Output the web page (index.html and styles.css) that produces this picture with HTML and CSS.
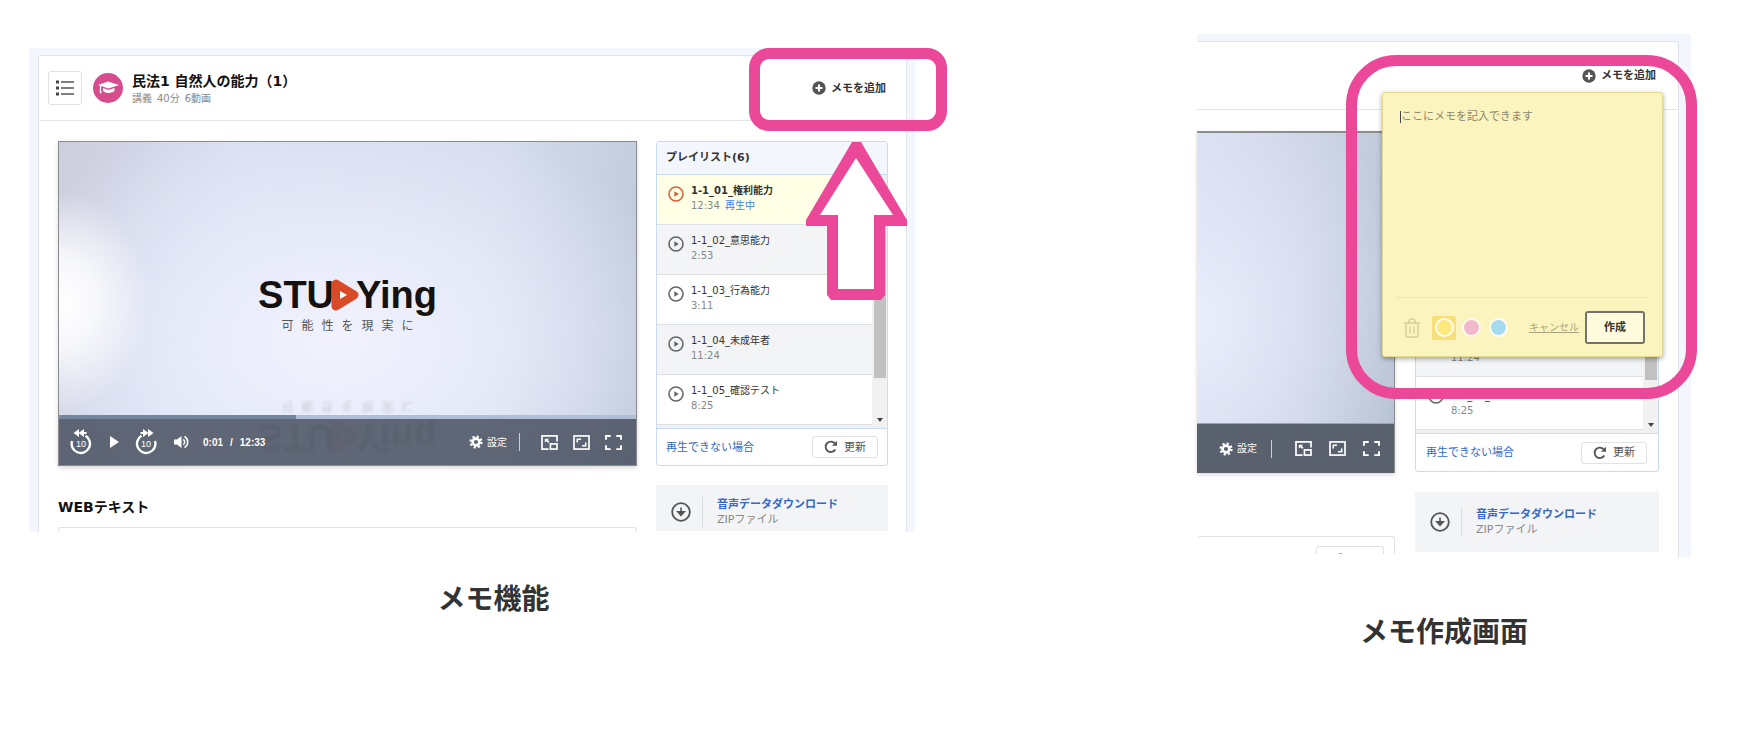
FILE: index.html
```html
<!DOCTYPE html>
<html lang="ja">
<head>
    <meta charset="UTF-8">
    <meta name="viewport" content="width=device-width, initial-scale=1.0">
    <title>メモ機能</title>
    <link rel="stylesheet" href="styles.css">
</head>
<body>
    <!-- shared icons -->
    <svg class="icon-defs" aria-hidden="true">
        <symbol id="i-plus" viewBox="0 0 14 14">
            <circle cx="7" cy="7" r="6.7" fill="#555"/>
            <path d="M7 3.5v7M3.5 7h7" stroke="#fff" stroke-width="2"/>
        </symbol>
        <symbol id="i-play" viewBox="0 0 16 16">
            <circle cx="8" cy="8" r="7" fill="none" stroke="currentColor" stroke-width="1.6"/>
            <path d="M6.3 5.2l4.6 2.8-4.6 2.8z" fill="currentColor"/>
        </symbol>
        <symbol id="i-down" viewBox="0 0 20 20">
            <circle cx="10" cy="10" r="8.8" fill="none" stroke="#555" stroke-width="1.8"/>
            <path d="M10 5.5v6M6.8 9.8l3.2 3.6 3.2-3.6z" stroke="#555" stroke-width="1.6" fill="#555"/>
        </symbol>
        <symbol id="i-reload" viewBox="0 0 14 14">
            <path d="M11.3 9.5A5.2 5.2 0 1 1 10.8 3.4" fill="none" stroke="#555" stroke-width="1.9"/>
            <path d="M13 .8v5H8z" fill="#555"/>
        </symbol>
        <symbol id="i-gear" viewBox="0 0 14 14">
            <circle cx="7" cy="7" r="3.4" fill="none" stroke="#fff" stroke-width="2.6"/>
            <circle cx="7" cy="7" r="5.4" fill="none" stroke="#fff" stroke-width="2.4" stroke-dasharray="2.12 2.12"/>
        </symbol>
        <symbol id="i-pip" viewBox="0 0 18 16">
            <path d="M8 15H1V1h16v6" fill="none" stroke="#fff" stroke-width="1.8"/>
            <rect x="10" y="9.5" width="7" height="5.5" fill="none" stroke="#fff" stroke-width="1.8"/>
            <path d="M4 4h4.500L7.200 5.400 9 7.200 7.600 8.500 5.700 6.700 4 8z" fill="#fff"/>
        </symbol>
        <symbol id="i-wide" viewBox="0 0 18 16">
            <rect x="1" y="1" width="16" height="14" fill="none" stroke="#fff" stroke-width="1.8"/>
            <path d="M4.500 8V4.500H8.500M13.500 8v3.500H9.500" fill="none" stroke="#fff" stroke-width="1.7"/>
        </symbol>
        <symbol id="i-full" viewBox="0 0 18 16">
            <path d="M1 5V1h5M12 1h5v4M17 11v4h-5M6 15H1v-4" fill="none" stroke="#fff" stroke-width="2"/>
        </symbol>
        <symbol id="i-back" viewBox="0 0 22 26">
            <path d="M2 12a9.200 9.200 0 1 0 13.500-5.200" fill="none" stroke="#fff" stroke-width="2.400"/>
            <path d="M9 0v8L3.500 4zM14 0v8L8.500 4zM13 3h3.500v2H13z" fill="#fff"/>
        </symbol>
        <symbol id="i-volume" viewBox="0 0 16 14">
            <path d="M1 4.500h3L8.500 1v12L4 9.500H1z" fill="#fff"/>
            <path d="M10.300 4.300a3.400 3.400 0 0 1 0 5.400M11.500 1.500a6.300 6.300 0 0 1 0 11" fill="none" stroke="#fff" stroke-width="1.500"/>
        </symbol>
        <symbol id="i-logo" viewBox="0 0 28 32">
            <path d="M5 5v22l18-11z" fill="#d94a26" stroke="#d94a26" stroke-width="9" stroke-linejoin="round"/>
            <path d="M9 12v8l7-4z" fill="#fff"/>
        </symbol>
    </svg>

    <main class="features">
        <figure class="feature feature-add">
            <div class="shot">
                <div class="screen">
                    <section class="card">
                        <header class="card-head">
                            <button class="menu-btn" type="button" aria-label="目次">
                                <svg width="20" height="18" viewBox="0 0 20 18">
                                    <path d="M1 3h3M1 9h3M1 15h3" stroke="#444" stroke-width="3"/>
                                    <path d="M6 3h13M6 9h13M6 15h13" stroke="#555" stroke-width="1.400"/>
                                </svg>
                            </button>
                            <svg class="badge" width="30" height="30" viewBox="0 0 30 30" aria-hidden="true">
                                <circle cx="15" cy="15" r="15" fill="#d64c8d"/>
                                <path d="M5 12l10-3.500L26 12l-10.500 3.500zM10 15l5.500 2 6-2v3c-3 2.500-9 2.500-11.500 0z" fill="#fff"/>
                                <path d="M7.500 12.500v8M6.800 19h1.700" stroke="#fff" stroke-width="1.300"/>
                            </svg>
                            <div class="lesson">
                                <h1>民法1 自然人の能力（1）</h1>
                                <p>講義&ensp;40分&ensp;6動画</p>
                            </div>
                            <button class="add-memo" type="button"><svg><use href="#i-plus"/></svg>メモを追加</button>
                        </header>
                        <div class="card-body">
                            <div class="col-main">
                                <div class="video">
                                    <div class="brand">
                                        <div class="brand-name">STU<svg><use href="#i-logo"/></svg>Ying</div>
                                        <div class="tagline"><span>可</span><span>能</span><span>性</span><span>を</span><span>現</span><span>実</span><span>に</span></div>
                                    </div>
                                    <div class="brand reflection" aria-hidden="true">
                                        <div class="brand-name">STU<svg><use href="#i-logo"/></svg>Ying</div>
                                        <div class="tagline"><span>可</span><span>能</span><span>性</span><span>を</span><span>現</span><span>実</span><span>に</span></div>
                                    </div>
                                    <div class="player">
                                        <div class="progress"><div class="buffered"></div></div>
                                        <div class="controls">
                                            <button type="button" class="skip" aria-label="10秒戻る"><svg><use href="#i-back"/></svg><span>10</span></button>
                                            <button type="button" class="play" aria-label="再生"><svg width="9" height="12" viewBox="0 0 9 12"><path d="M0 0l9 6-9 6z" fill="#fff"/></svg></button>
                                            <button type="button" class="skip forward" aria-label="10秒進む"><svg><use href="#i-back"/></svg><span>10</span></button>
                                            <button type="button" class="volume" aria-label="音量"><svg><use href="#i-volume"/></svg></button>
                                            <span class="time"><span>0:01</span><span>/</span><span>12:33</span></span>
                                            <button type="button" class="settings"><svg><use href="#i-gear"/></svg>設定</button>
                                            <span class="divider"></span>
                                            <button type="button" class="mode" aria-label="小窓"><svg><use href="#i-pip"/></svg></button>
                                            <button type="button" class="mode" aria-label="ワイド"><svg><use href="#i-wide"/></svg></button>
                                            <button type="button" class="mode" aria-label="全画面"><svg><use href="#i-full"/></svg></button>
                                        </div>
                                    </div>
                                </div>
                                <h2>WEBテキスト</h2>
                                <div class="text-box"></div>
                            </div>
                            <aside class="col-side">
                                <div class="playlist">
                                    <h3>プレイリスト(6)</h3>
                                    <div class="list-area">
                                        <ul>
                                            <li class="playing"><svg><use href="#i-play"/></svg><div><b>1-1_01_権利能力</b><small>12:34 <em>再生中</em></small></div></li>
                                            <li><svg><use href="#i-play"/></svg><div>1-1_02_意思能力<small>2:53</small></div></li>
                                            <li><svg><use href="#i-play"/></svg><div>1-1_03_行為能力<small>3:11</small></div></li>
                                            <li><svg><use href="#i-play"/></svg><div>1-1_04_未成年者<small>11:24</small></div></li>
                                            <li><svg><use href="#i-play"/></svg><div>1-1_05_確認テスト<small>8:25</small></div></li>
                                        </ul>
                                        <div class="scrollbar"><div class="thumb"></div><i></i></div>
                                    </div>
                                    <div class="list-foot">
                                        <a href="#">再生できない場合</a>
                                        <button type="button"><svg><use href="#i-reload"/></svg>更新</button>
                                    </div>
                                </div>
                                <div class="download">
                                    <svg><use href="#i-down"/></svg>
                                    <div><a href="#">音声データダウンロード</a><p>ZIPファイル</p></div>
                                </div>
                            </aside>
                        </div>
                    </section>
                </div>
                <div class="ring"></div>
                <svg class="arrow" viewBox="0 0 101 158" aria-hidden="true">
                    <path d="M46 0h9L101 78v6H79v69l-4 5H25l-4-5V84H0v-6z" fill="#ec4899"/>
                    <path d="M50 16L14 73h18v74h36V73h19z" fill="#fff"/>
                </svg>
            </div>
            <figcaption>メモ機能</figcaption>
        </figure>

        <figure class="feature feature-create">
            <div class="shot">
                <div class="screen">
                    <section class="card">
                        <header class="card-head">
                            <button class="add-memo" type="button"><svg><use href="#i-plus"/></svg>メモを追加</button>
                        </header>
                        <div class="card-body">
                            <div class="col-main">
                                <div class="video">
                                    <div class="player">
                                        <div class="controls">
                                            <button type="button" class="settings"><svg><use href="#i-gear"/></svg>設定</button>
                                            <span class="divider"></span>
                                            <button type="button" class="mode" aria-label="小窓"><svg><use href="#i-pip"/></svg></button>
                                            <button type="button" class="mode" aria-label="ワイド"><svg><use href="#i-wide"/></svg></button>
                                            <button type="button" class="mode" aria-label="全画面"><svg><use href="#i-full"/></svg></button>
                                        </div>
                                    </div>
                                </div>
                                <div class="text-box"><div class="text-tool"><span></span></div></div>
                            </div>
                            <aside class="col-side">
                                <div class="playlist">
                                    <h3></h3>
                                    <div class="list-area">
                                        <ul>
                                            <li></li>
                                            <li></li>
                                            <li></li>
                                            <li><div>&nbsp;<small>11:24</small></div></li>
                                            <li><svg><use href="#i-play"/></svg><div>1-1_05_<small>8:25</small></div></li>
                                        </ul>
                                        <div class="scrollbar"><div class="thumb"></div><i></i></div>
                                    </div>
                                    <div class="list-foot">
                                        <a href="#">再生できない場合</a>
                                        <button type="button"><svg><use href="#i-reload"/></svg>更新</button>
                                    </div>
                                </div>
                                <div class="download">
                                    <svg><use href="#i-down"/></svg>
                                    <div><a href="#">音声データダウンロード</a><p>ZIPファイル</p></div>
                                </div>
                            </aside>
                        </div>
                    </section>
                </div>
                <form class="note">
                    <textarea aria-label="メモ" placeholder="ここにメモを記入できます"></textarea>
                    <div class="note-foot">
                        <button type="button" class="trash" aria-label="削除">
                            <svg width="16" height="20" viewBox="0 0 16 20">
                                <path d="M0 5h16M5 5V3q0-2 3-2t3 2v2M2 5v12q0 2 2 2h8q2 0 2-2V5M6 8.500v7M10 8.500v7" fill="none" stroke="#d5cd98" stroke-width="1.400"/>
                            </svg>
                        </button>
                        <div class="swatches">
                            <input type="radio" name="color" class="yellow" aria-label="黄" checked>
                            <input type="radio" name="color" class="pink" aria-label="ピンク">
                            <input type="radio" name="color" class="blue" aria-label="青">
                        </div>
                        <a href="#" class="cancel">キャンセル</a>
                        <button type="button" class="create">作成</button>
                    </div>
                </form>
                <div class="ring"></div>
            </div>
            <figcaption>メモ作成画面</figcaption>
        </figure>
    </main>
</body>
</html>
```

FILE: styles.css
```css
* {
    box-sizing: border-box;
}
body {
    margin: 0;
    background: #fff;
    color: #333;
    font-family: "DejaVu Sans", "Noto Sans CJK JP", sans-serif;
    font-size: 10px;
    line-height: 15px;
}
h1, h2, h3, p, ul, figure {
    margin: 0;
    padding: 0;
}
button {
    font: inherit;
    color: inherit;
    background: none;
    border: none;
    padding: 0;
    cursor: pointer;
}
svg {
    display: block;
    flex: none;
}
.icon-defs {
    position: absolute;
    width: 0;
    height: 0;
}

/* page */
.features {
    display: flex;
    gap: 239px;
    padding: 34px 57px 0 29px;
}
.feature-add {
    flex: 929 1 0;
    padding-top: 14px;
}
.feature-create {
    flex: 494 1 0;
}
.shot {
    position: relative;
}
.feature-add .shot {
    margin-right: 43px;
}
figcaption {
    margin-top: 45px;
    text-align: center;
    font-family: "Noto Sans CJK JP", sans-serif;
    font-size: 28px;
    font-weight: bold;
    line-height: 40px;
}
.feature-create figcaption {
    margin-top: 53px;
}

/* card */
.screen {
    padding: 7px 8px 0 9px;
    background: #f3f7fd;
}
.card {
    background: #fff;
    border: 1px solid #dfe4ea;
    border-bottom: none;
    border-radius: 3px 3px 0 0;
}
.card-head {
    display: flex;
    align-items: center;
    height: 65px;
    padding: 0 20px 0 9px;
    border-bottom: 1px solid #e3e6e9;
}
.menu-btn {
    display: flex;
    align-items: center;
    justify-content: center;
    width: 34px;
    height: 34px;
    border: 1px solid #dfe1e4;
    border-radius: 3px;
}
.badge {
    margin: 0 9px 0 11px;
}
.lesson h1 {
    color: #111;
    font-size: 14px;
    line-height: 20px;
}
.lesson p {
    color: #888;
}
.add-memo {
    display: flex;
    align-items: center;
    gap: 5px;
    margin-left: auto;
    font-size: 11px;
    font-weight: bold;
}
.add-memo svg {
    width: 14px;
    height: 14px;
}
.card-body {
    display: grid;
    grid-template-columns: 1fr 232px;
    gap: 19px;
    padding: 20px 18px 0 19px;
}

/* video */
.video {
    position: relative;
    height: 325px;
    padding-top: 128px;
    overflow: hidden;
    border: 1px solid #8a8c90;
    background:
        radial-gradient(ellipse 90px 110px at 0 160px, #fff, rgba(255, 255, 255, 0.8) 40%, rgba(255, 255, 255, 0)),
        radial-gradient(ellipse 62% 75% at 48% 62%, #f1f2fd, rgba(232, 235, 250, 0.9) 45%, rgba(225, 231, 247, 0)),
        linear-gradient(100deg, #cccddd, #d9dff0 30%, #d5dcec 70%, #bdc7d8);
    box-shadow: 0 2px 4px rgba(0, 0, 0, 0.15);
}
.brand {
    display: flex;
    flex-direction: column;
    align-items: center;
    height: 71px;
}
.brand-name {
    display: flex;
    align-items: center;
    color: #15110f;
    font-family: "Liberation Sans", sans-serif;
    font-size: 38px;
    font-weight: bold;
    line-height: 50px;
}
.brand-name svg {
    width: 28px;
    height: 32px;
    margin: 0 -3px;
}
.tagline {
    display: flex;
    gap: 8px;
    margin-top: -4px;
    color: #555;
    font-size: 12px;
    line-height: 20px;
}
.reflection {
    margin-top: 50px;
    opacity: 0.2;
    filter: blur(1px);
    transform: scaleY(-1);
}
.player {
    position: absolute;
    left: 0;
    right: 0;
    bottom: 0;
}
.progress {
    height: 4px;
    background: #b0bfd5;
    border-left: 1px solid #e0704f;
}
.buffered {
    width: 41%;
    height: 4px;
    background: #7585a0;
}
.controls {
    display: flex;
    align-items: center;
    height: 46px;
    padding: 0 14px 0 11px;
    background: rgba(75, 83, 98, 0.87);
    color: #fff;
}
.skip {
    position: relative;
    width: 22px;
    height: 26px;
}
.skip svg {
    width: 22px;
    height: 26px;
}
.skip span {
    position: absolute;
    left: 0;
    right: 0;
    top: 8px;
    font-family: "Liberation Sans", sans-serif;
    font-size: 9px;
    line-height: 14px;
}
.forward svg {
    transform: scaleX(-1);
}
.play {
    margin: 0 16px 0 18px;
}
.volume {
    margin: 0 14px 0 16px;
}
.volume svg {
    width: 16px;
    height: 14px;
}
.time {
    display: flex;
    gap: 7px;
    font-family: "Liberation Sans", sans-serif;
    font-weight: bold;
}
.settings {
    display: flex;
    align-items: center;
    gap: 4px;
    margin-left: auto;
}
.settings svg {
    width: 14px;
    height: 14px;
}
.divider {
    width: 1px;
    height: 18px;
    margin: 0 3px 0 12px;
    background: #ccd0d6;
}
.mode {
    margin-left: 15px;
}
.divider + .mode {
    margin-left: 18px;
}
.mode svg {
    width: 17px;
    height: 15px;
}
.col-main h2 {
    margin-top: 31px;
    color: #111;
    font-size: 14px;
    line-height: 20px;
}
.text-box {
    height: 5px;
    margin-top: 10px;
    border: 1px solid #dfe2e6;
    border-bottom: none;
    border-radius: 3px 3px 0 0;
}

/* playlist */
.playlist {
    border: 1px solid #c9dbf0;
    border-radius: 3px;
}
.playlist h3 {
    height: 33px;
    padding-left: 9px;
    background: #f3f7fd;
    border-bottom: 1px solid #c9dbf0;
    border-radius: 3px 3px 0 0;
    font-size: 11px;
    line-height: 31px;
}
.list-area {
    display: flex;
    border-bottom: 1px solid #c9dbf0;
    background: #f0f1f3;
    padding-bottom: 3px;
}
.list-area ul {
    flex: 1;
    list-style: none;
}
.list-area li {
    display: flex;
    gap: 7px;
    height: 50px;
    padding: 8px 0 0 11px;
    background: #fff;
    border-bottom: 1px solid #dde1e6;
}
.list-area li:nth-child(even) {
    background: #f3f4f6;
}
.list-area li svg {
    width: 16px;
    height: 16px;
    margin-top: 3px;
    color: #666;
}
.list-area small {
    display: block;
    color: #888;
    font-size: 10px;
}
.list-area em {
    margin-left: 2px;
    color: #3b82f0;
    font-style: normal;
}
.list-area .playing {
    background: #ffffe6;
}
.list-area .playing svg {
    color: #d9603a;
}
.scrollbar {
    display: flex;
    flex-direction: column;
    align-items: center;
    width: 15px;
    padding: 15px 0 3px;
    background: #f1f1f1;
}
.thumb {
    width: 12px;
    height: 188px;
    background: #c1c1c1;
}
.scrollbar i {
    margin-top: auto;
    border: 3px solid transparent;
    border-top: 4px solid #444;
    border-bottom: none;
}
.list-foot {
    display: flex;
    align-items: center;
    justify-content: space-between;
    height: 36px;
    padding: 0 9px;
    font-size: 11px;
}
.list-foot a, .download a {
    color: #3569c4;
    text-decoration: none;
}
.list-foot button {
    display: flex;
    align-items: center;
    justify-content: center;
    gap: 6px;
    width: 66px;
    height: 22px;
    border: 1px solid #dfe2e6;
    border-radius: 3px;
    color: #555;
}
.list-foot button svg {
    width: 14px;
    height: 14px;
}
.download {
    display: flex;
    align-items: center;
    margin-top: 19px;
    height: 46px;
    padding: 8px 0 0 15px;
    background: #f3f4f6;
    font-size: 11px;
}
.download svg {
    width: 20px;
    height: 20px;
}
.download > div {
    margin-left: 11px;
    padding-left: 14px;
    border-left: 1px solid #d8dbdf;
}
.download a {
    font-weight: bold;
}
.download p {
    color: #888;
}

/* highlights */
.ring {
    position: absolute;
    top: 0;
    right: -32px;
    width: 198px;
    height: 83px;
    border: 11px solid #ec4899;
    border-radius: 20px;
    pointer-events: none;
}
.arrow {
    position: absolute;
    top: 94px;
    right: 8px;
    width: 101px;
    height: 158px;
}

/* second screen, slightly larger */
.feature-create .screen {
    padding: 7px 12px 0 0;
}
.feature-create .card {
    border-left: none;
    border-radius: 0 3px 0 0;
}
.feature-create .card-head {
    height: 68px;
    padding: 0 22px 0 0;
}
.feature-create .card-body {
    grid-template-columns: 1fr 244px;
    gap: 20px;
    padding: 21px 19px 0 0;
}
.feature-create .video {
    height: 342px;
    border-width: 2px 1px 0 0;
    background:
        radial-gradient(ellipse 110% 75% at 0 55%, #e9edfc, rgba(233, 237, 252, 0)),
        linear-gradient(100deg, #d6ddef, #cbd2e3 50%, #b5c1d1);
}
.feature-create .controls {
    height: 50px;
    border-top: 1px solid #93a6c0;
    background: #59606e;
}
.feature-create .mode {
    margin-left: 17px;
}
.feature-create .divider {
    margin-left: 14px;
}
.feature-create .divider + .mode {
    margin-left: 20px;
}
.feature-create .text-box {
    display: flex;
    justify-content: flex-end;
    height: 18px;
    margin-top: 63px;
    padding: 9px 10px 0 0;
    border-left: none;
}
.text-tool {
    width: 68px;
    padding: 6px 22px 0;
    border: 1px solid #dfe2e6;
    border-bottom: none;
    border-radius: 3px 3px 0 0;
}
.text-tool span {
    display: block;
    width: 3px;
    height: 1px;
    background: #8fce7f;
}
.feature-create .list-area li {
    height: 53px;
    padding-left: 12px;
}
.feature-create .list-area li div {
    padding-top: 3px;
}
.feature-create .list-area li > div:first-child {
    padding-left: 23px;
}
.feature-create .thumb {
    height: 200px;
}
.feature-create .list-foot {
    height: 37px;
    padding: 0 11px 0 10px;
}
.feature-create .download {
    margin-top: 20px;
    height: 60px;
    padding-top: 0;
}
.feature-create .screen .card-body {
    padding-bottom: 3px;
}
.feature-create .ring {
    top: 21px;
    right: -6px;
    width: 351px;
    height: 344px;
    border-radius: 50px;
}

/* sticky note */
.note {
    position: absolute;
    top: 58px;
    right: 28px;
    display: flex;
    flex-direction: column;
    width: 281px;
    height: 265px;
    padding: 12px 14px;
    background: #fcf4be;
    border: 1px solid #e3d98f;
    border-radius: 3px;
    box-shadow: 0 2px 5px rgba(0, 0, 0, 0.35);
}
.note::before {
    content: "";
    position: absolute;
    top: 18px;
    left: 17px;
    width: 1px;
    height: 12px;
    background: #444;
}
.note textarea {
    flex: 1;
    padding: 4px;
    background: none;
    border: none;
    border-bottom: 1px solid #efe5ae;
    outline: none;
    resize: none;
    color: #333;
    font: inherit;
    font-size: 11px;
}
.note textarea::placeholder {
    color: #8b876b;
}
.note-foot {
    display: flex;
    align-items: center;
    padding: 13px 3px 0 7px;
}
.swatches {
    display: flex;
    align-items: center;
    margin-left: 12px;
    gap: 3px;
}
.swatches input {
    appearance: none;
    display: grid;
    place-items: center;
    width: 24px;
    height: 24px;
    margin: 0;
    border-radius: 2px;
}
.swatches input::before {
    content: "";
    width: 15px;
    height: 15px;
    border: 2px solid #fffdf0;
    border-radius: 50%;
}
.swatches input:checked {
    background: #f8df7c;
}
.yellow::before {
    background: #fde97c;
}
.pink::before {
    background: #f2b8cb;
}
.blue::before {
    background: #a5dbee;
}
.cancel {
    margin-left: auto;
    color: #aaa47c;
}
.create {
    width: 60px;
    height: 33px;
    margin-left: 6px;
    background: #fffbdc;
    border: 2px solid #73736c;
    border-radius: 3px;
    font-size: 11px;
    font-weight: bold;
}
```
